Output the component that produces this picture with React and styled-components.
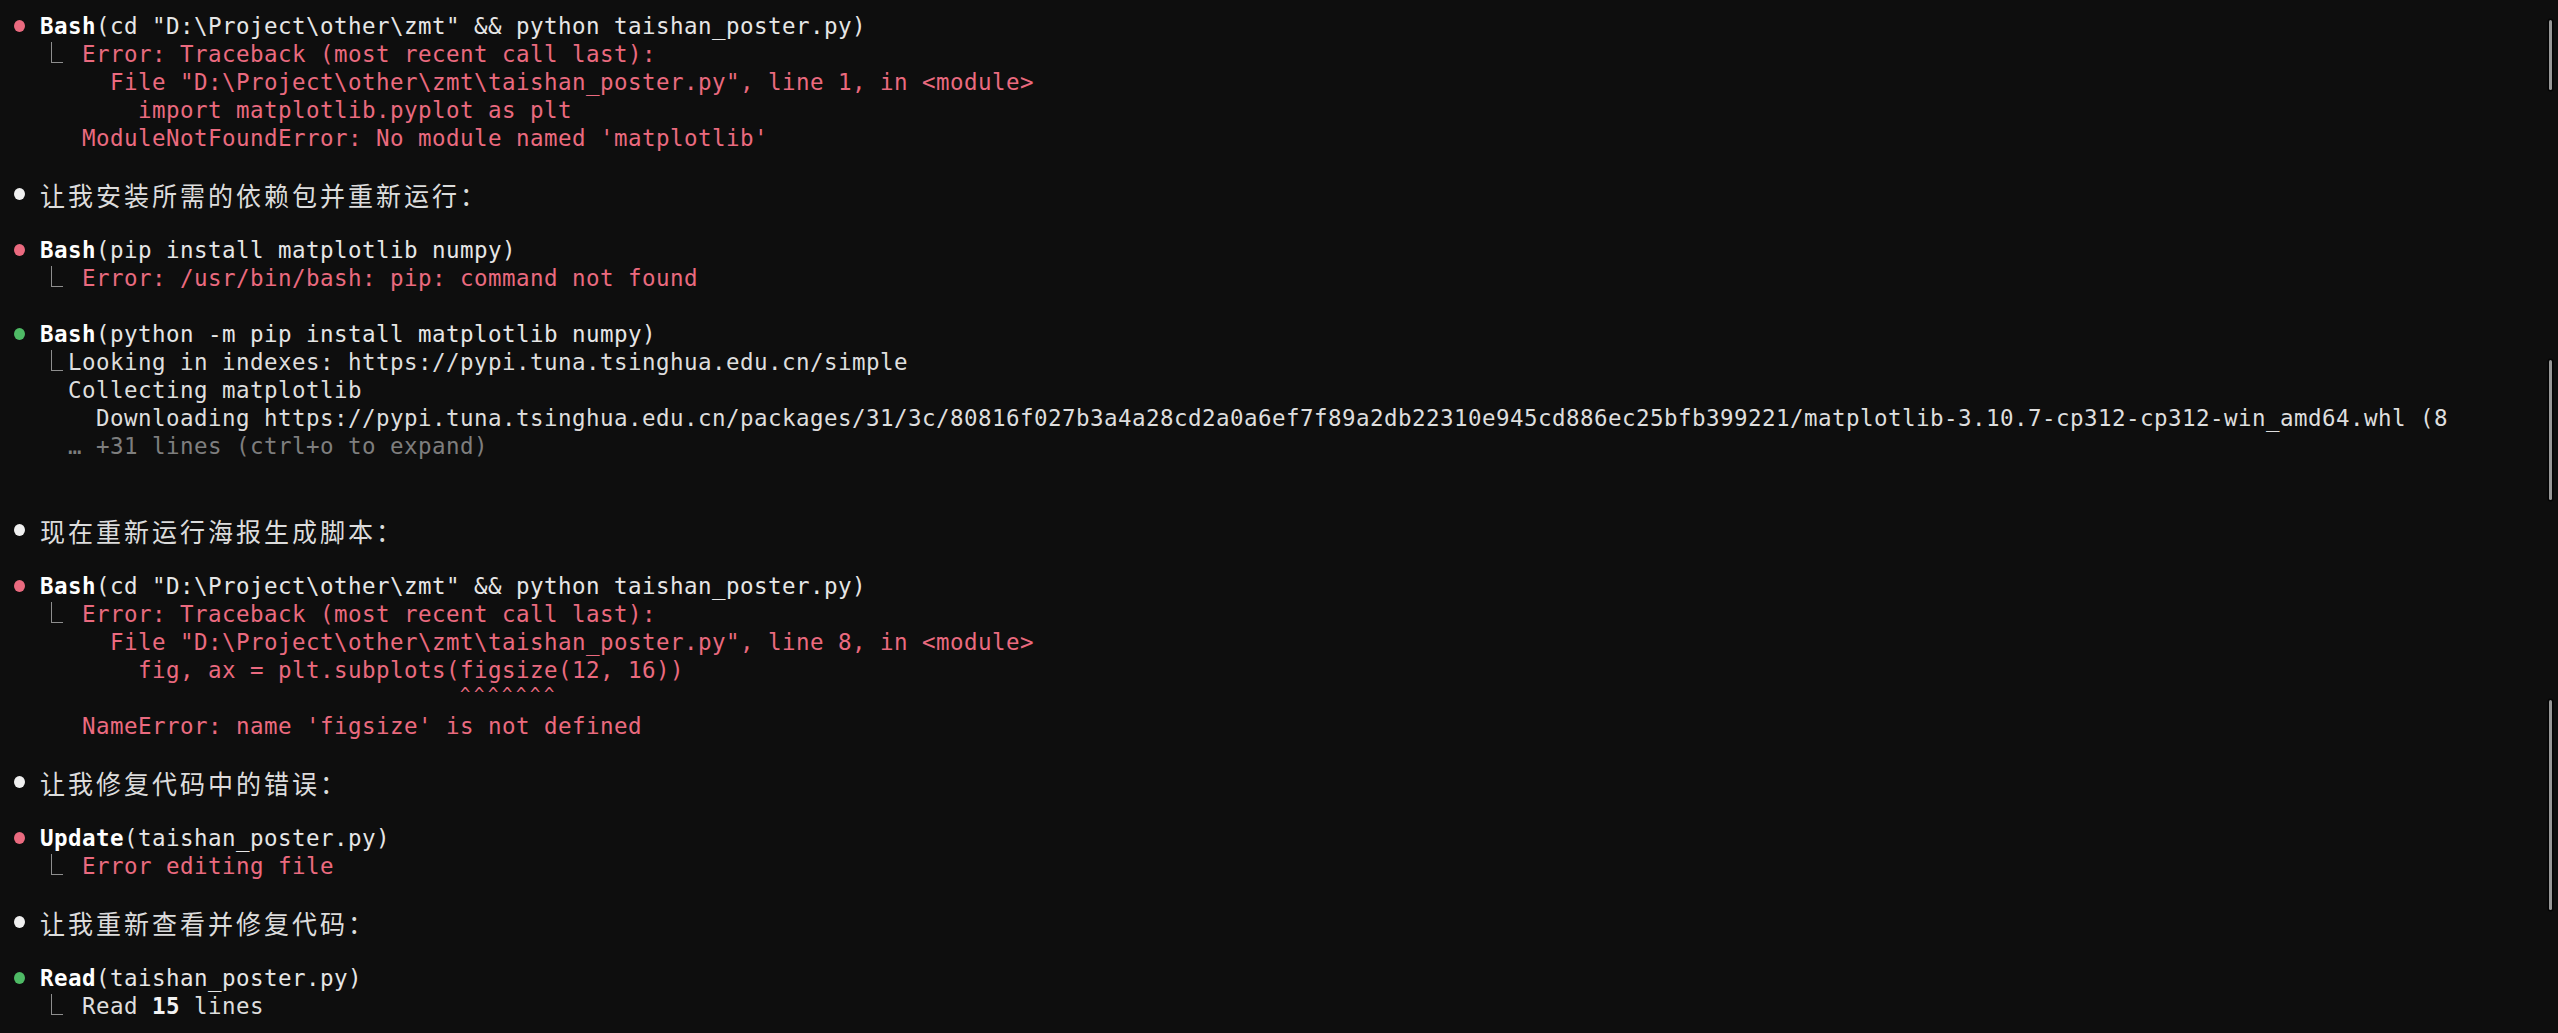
import React from 'react';
import styled, { createGlobalStyle } from 'styled-components';

// one terminal cell is 14px wide, one line 28px high
const CELL = 14;

const tones = {
  error: '#ea6a7f',
  muted: '#7e7e7e',
  plain: '#dedede',
};

const dots = {
  error: '#ea6a7f',
  ok: '#4eba65',
  info: '#f0f0f0',
};

const GlobalStyle = createGlobalStyle`
  html, body {
    margin: 0;
    padding: 0;
    background: #0e0e0e;
  }
`;

const Terminal = styled.div`
  position: relative;
  height: 100vh;
  overflow: hidden;
  box-sizing: border-box;
  padding: 12px 12px;
  background: #0e0e0e;
  color: ${tones.plain};
  font-family: "DejaVu Sans Mono", "Liberation Mono", "Noto Sans CJK SC", monospace;
  font-size: 22.5px;
  letter-spacing: 0.454px;
`;

const Row = styled.div`
  display: flex;
  align-items: center;
  height: 28px;
  line-height: 28px;
  padding-left: ${p => (p.$col || 0) * CELL}px;
  white-space: pre;
  color: ${p => (p.$tone ? tones[p.$tone] : 'inherit')};
`;

const Gutter = styled.span`
  display: flex;
  align-items: center;
  width: ${CELL * 2}px;
  height: 100%;
  flex-shrink: 0;
`;

const Dot = styled.span`
  width: 11px;
  height: 12px;
  margin: -1px 0 0 1.5px;
  border-radius: 50%;
  background: ${p => dots[p.$status]};
`;

const ToolName = styled.span`
  font-weight: bold;
  color: #ffffff;
`;

const Args = styled.span`
  color: #e6e6e6;
`;

const Elbow = styled.span`
  align-self: flex-start;
  box-sizing: border-box;
  flex-shrink: 0;
  width: 12px;
  height: 21px;
  margin: 2px 5px 0 -3px;
  border-left: 1.5px solid #8e8e8e;
  border-bottom: 1.5px solid #8e8e8e;
`;

const Text = styled.span``;

const Strong = styled.span`
  font-weight: bold;
  color: #f2f2f2;
`;

const Cjk = styled.span`
  display: inline-block;
  font-family: "Noto Sans CJK SC", sans-serif;
  font-size: 25px;
  letter-spacing: 3px;
  color: #dcdcdc;
  transform: scaleY(1.06);
`;

const Caret = styled.span`
  font-size: 17px;
  letter-spacing: ${CELL - 17 * 0.602}px;
  align-self: flex-start;
  line-height: 20px;
`;

const ScrollMark = styled.div`
  position: absolute;
  right: 6px;
  top: ${p => p.$top}px;
  height: ${p => p.$height}px;
  width: 3px;
  border-radius: 2px;
  background: #979797;
  box-shadow: 0 0 0 1.5px #050505;
`;

const CD_ARGS = String.raw`cd "D:\Project\other\zmt" && python taishan_poster.py`;
const FILE_1 = String.raw`File "D:\Project\other\zmt\taishan_poster.py", line 1, in <module>`;
const FILE_8 = String.raw`File "D:\Project\other\zmt\taishan_poster.py", line 8, in <module>`;
const WHEEL =
  'Downloading https://pypi.tuna.tsinghua.edu.cn/packages/31/3c/80816f027b3a4a28cd2a0a6ef7f89a2db22310e945cd886ec25bfb399221/matplotlib-3.10.7-cp312-cp312-win_amd64.whl (8';

function ToolCall({ status, name, args }) {
  return (
    <Row>
      <Gutter><Dot $status={status} /></Gutter>
      <ToolName>{name}</ToolName>
      <Args>({args})</Args>
    </Row>
  );
}

function Message({ children }) {
  return (
    <Row>
      <Gutter><Dot $status="info" /></Gutter>
      <Cjk>{children}</Cjk>
    </Row>
  );
}

function Result({ tone, tight, children }) {
  return (
    <Row $col={3} $tone={tone}>
      <Elbow />
      <Text>{tight ? '' : ' '}{children}</Text>
    </Row>
  );
}

function Line({ col, tone, children }) {
  return (
    <Row $col={col} $tone={tone}>
      <Text>{children}</Text>
    </Row>
  );
}

const Blank = () => <Row />;

export default function App() {
  return (
    <>
      <GlobalStyle />
      <Terminal>
        <ToolCall status="error" name="Bash" args={CD_ARGS} />
        <Result tone="error">Error: Traceback (most recent call last):</Result>
        <Line col={7} tone="error">{FILE_1}</Line>
        <Line col={9} tone="error">import matplotlib.pyplot as plt</Line>
        <Line col={5} tone="error">ModuleNotFoundError: No module named 'matplotlib'</Line>
        <Blank />
        <Message>让我安装所需的依赖包并重新运行：</Message>
        <Blank />
        <ToolCall status="error" name="Bash" args="pip install matplotlib numpy" />
        <Result tone="error">Error: /usr/bin/bash: pip: command not found</Result>
        <Blank />
        <ToolCall status="ok" name="Bash" args="python -m pip install matplotlib numpy" />
        <Result tight>Looking in indexes: https://pypi.tuna.tsinghua.edu.cn/simple</Result>
        <Line col={4}>Collecting matplotlib</Line>
        <Line col={6}>{WHEEL}</Line>
        <Line col={4} tone="muted">… +31 lines (ctrl+o to expand)</Line>
        <Blank />
        <Blank />
        <Message>现在重新运行海报生成脚本：</Message>
        <Blank />
        <ToolCall status="error" name="Bash" args={CD_ARGS} />
        <Result tone="error">Error: Traceback (most recent call last):</Result>
        <Line col={7} tone="error">{FILE_8}</Line>
        <Line col={9} tone="error">fig, ax = plt.subplots(figsize(12, 16))</Line>
        <Row $col={32} $tone="error"><Caret>^^^^^^^</Caret></Row>
        <Line col={5} tone="error">NameError: name 'figsize' is not defined</Line>
        <Blank />
        <Message>让我修复代码中的错误：</Message>
        <Blank />
        <ToolCall status="error" name="Update" args="taishan_poster.py" />
        <Result tone="error">Error editing file</Result>
        <Blank />
        <Message>让我重新查看并修复代码：</Message>
        <Blank />
        <ToolCall status="ok" name="Read" args="taishan_poster.py" />
        <Result>Read <Strong>15</Strong> lines</Result>

        <ScrollMark $top={20} $height={70} />
        <ScrollMark $top={360} $height={140} />
        <ScrollMark $top={700} $height={210} />
        <ScrollMark $top={1040} $height={20} />
      </Terminal>
    </>
  );
}
